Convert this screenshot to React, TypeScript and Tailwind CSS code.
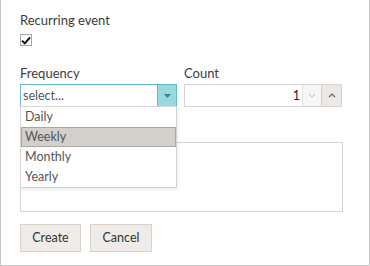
import React from 'react'

const font = { fontFamily: 'Lato, "Open Sans", sans-serif' }

function Caret({ up = false, color }: { up?: boolean; color: string }) {
  return (
    <svg width="8" height="5" viewBox="0 0 8 5" fill="none">
      <path
        d={up ? 'M1 4 L4 1 L7 4' : 'M1 1 L4 4 L7 1'}
        stroke={color}
        strokeWidth="1.2"
        fill="none"
      />
    </svg>
  )
}

export default function App() {
  const options = ['Daily', 'Weekly', 'Monthly', 'Yearly']

  return (
    <div
      className="w-[370px] h-[266px] bg-white border-l border-r border-b border-[#c8c8c8] text-[12.5px] leading-[18px] text-[#3b3b3b] overflow-hidden"
      style={font}
    >
      <div className="pl-[19px] pt-[11px] w-[342px]">
        <div className="h-[18px] text-[13px]">Recurring event</div>
        <div className="mt-[5px] w-[12px] h-[12px] border border-[#a8a8a8] bg-white flex items-center justify-center">
          <svg width="10" height="9" viewBox="0 0 10 9">
            <path d="M1 4.6 L3.8 7.4 L9 1.4" stroke="#111" strokeWidth="2" fill="none" />
          </svg>
        </div>

        <div className="mt-[18px] grid grid-cols-[157px_158px] gap-x-[7px]">
          <div className="h-[20px] text-[13px]">Frequency</div>
          <div className="h-[20px] text-[13px]">Count</div>

          <div className="relative h-[23px]">
            <div className="flex h-full border border-[#5fbcc5] bg-white">
              <div className="flex-1 pl-[2px] leading-[21px] text-[#555]">select...</div>
              <div className="w-[19px] border-l border-[#5fbcc5] bg-[#9bd7de] flex items-center justify-center">
                <svg width="7" height="4" viewBox="0 0 7 4">
                  <path d="M0 0 L7 0 L3.5 4 Z" fill="#2f8793" />
                </svg>
              </div>
            </div>

            <div className="absolute left-0 top-[22px] z-10 w-[157px] h-[82px] bg-white border border-[#d6d6d6] shadow-[1px_2px_3px_rgba(0,0,0,0.08)] text-[#555]">
              {options.map((o) =>
                o === 'Weekly' ? (
                  <div
                    key={o}
                    className="h-[20px] leading-[18px] pl-[3px] bg-[#d3cfcb] border border-[#aaa6a2]"
                  >
                    {o}
                  </div>
                ) : (
                  <div key={o} className="h-[20px] leading-[20px] pl-[4px]">
                    {o}
                  </div>
                )
              )}
            </div>
          </div>

          <div className="flex h-[23px] border border-[#d4d4d4] bg-white">
            <div className="flex-1 text-right pr-[2px] leading-[21px] text-[#222]">1</div>
            <div className="w-[19px] border-l border-[#e2e2e2] bg-[#f7f6f5] flex items-center justify-center">
              <Caret color="#cfcfcf" />
            </div>
            <div className="w-[20px] border-l border-[#d4d0cc] bg-[#ebe8e5] flex items-center justify-center">
              <Caret up color="#666" />
            </div>
          </div>
        </div>

        <div className="mt-[35px] h-[70px] w-[323px] border border-[#d4d4d4] bg-white" />

        <div className="mt-[12px] flex gap-[9px]">
          <button className="h-[28px] w-[61px] bg-[#efebe8] border border-[#d6d2ce] text-[#333]">
            Create
          </button>
          <button className="h-[28px] w-[62px] bg-[#efebe8] border border-[#d6d2ce] text-[#333]">
            Cancel
          </button>
        </div>
      </div>
    </div>
  )
}
